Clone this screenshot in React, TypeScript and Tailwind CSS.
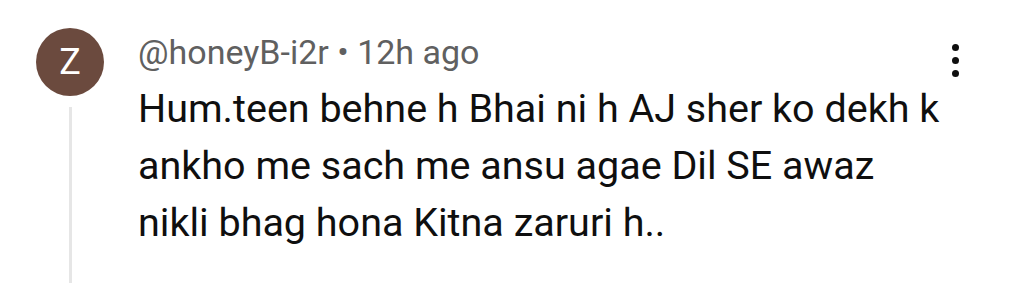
import React from "react";

export default function App() {
  return (
    <div
      className="w-[1024px] h-[283px] bg-white overflow-hidden flex"
      style={{ fontFamily: "Roboto, 'Liberation Sans', sans-serif" }}
    >
      <div className="w-[138px] shrink-0 flex flex-col items-center pl-[2px] pt-[28px]">
        <div className="w-[68px] h-[68px] rounded-full bg-[#6b4a3e] text-white flex items-center justify-center text-[36px] leading-none">
          Z
        </div>
        <div className="w-[3px] flex-1 mt-[11px] bg-[#e6e6e6]"></div>
      </div>
      <div className="w-[808px] shrink-0 pt-[32px]">
        <div className="text-[34px] leading-[40px] text-[#606060]">@honeyB-i2r • 12h ago</div>
        <p className="text-[39.5px] leading-[57px] text-[#0f0f0f] mt-[8px]">
          Hum.teen behne h Bhai ni h AJ sher ko dekh k ankho me sach me ansu agae Dil SE awaz nikli bhag hona Kitna zaruri h..
        </p>
      </div>
      <div className="flex-1 flex flex-col items-center gap-[6px] pt-[44px] pr-[60px]">
        <span className="w-[7px] h-[7px] rounded-full bg-[#0f0f0f]"></span>
        <span className="w-[7px] h-[7px] rounded-full bg-[#0f0f0f]"></span>
        <span className="w-[7px] h-[7px] rounded-full bg-[#0f0f0f]"></span>
      </div>
    </div>
  );
}
